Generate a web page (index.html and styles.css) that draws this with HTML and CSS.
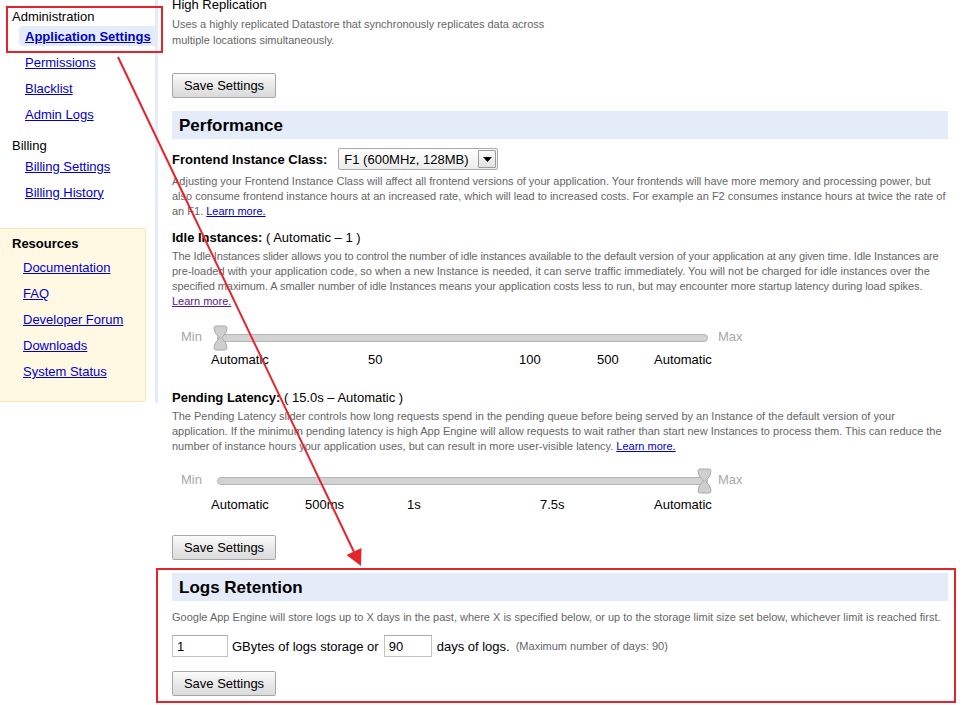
FILE: index.html
```html
<!DOCTYPE html>
<html>
<head>
<meta charset="utf-8">
<title>Application Settings</title>
<link rel="stylesheet" href="styles.css">
</head>
<body>
<div class="page">
  <nav class="sidebar">
    <div class="nav-title admin">Administration</div>
    <ul class="nav-list">
      <li class="nav-item active"><a href="#">Application Settings</a></li>
      <li class="nav-item"><a href="#">Permissions</a></li>
      <li class="nav-item"><a href="#">Blacklist</a></li>
      <li class="nav-item"><a href="#">Admin Logs</a></li>
    </ul>
    <div class="nav-title billing">Billing</div>
    <ul class="nav-list billing-list">
      <li class="nav-item"><a href="#">Billing Settings</a></li>
      <li class="nav-item"><a href="#">Billing History</a></li>
    </ul>
    <div class="resources">
      <div class="res-title">Resources</div>
      <ul class="res-list">
        <li><a href="#">Documentation</a></li>
        <li><a href="#">FAQ</a></li>
        <li><a href="#">Developer Forum</a></li>
        <li><a href="#">Downloads</a></li>
        <li><a href="#">System Status</a></li>
      </ul>
    </div>
  </nav>

  <main class="main">
    <div class="opt-title">High Replication</div>
    <p class="desc desc-hr">Uses a highly replicated Datastore that synchronously replicates data across<br>multiple locations simultaneously.</p>
    <button class="btn btn-first">Save Settings</button>

    <h2 class="section-head perf">Performance</h2>
    <div class="field-row">
      <span class="field-label">Frontend Instance Class:</span>
      <div class="select">
        <span class="select-text">F1 (600MHz, 128MB)</span>
        <span class="select-arrow"><svg width="9" height="5" viewBox="0 0 9 5"><path d="M0 0H9L4.5 5Z" fill="#000"/></svg></span>
      </div>
    </div>
    <p class="desc desc-fe">Adjusting your Frontend Instance Class will affect all frontend versions of your application. Your frontends will have more memory and processing power, but<br>also consume frontend instance hours at an increased rate, which will lead to increased costs. For example an F2 consumes instance hours at twice the rate of<br>an F1. <a href="#" class="learn">Learn more.</a></p>

    <div class="sub-head idle-head"><b>Idle Instances:</b> ( Automatic – 1 )</div>
    <p class="desc desc-sub"><span class="tight1">The Idle Instances slider allows you to control the number of idle instances available to the default version of your application at any given time. Idle Instances are</span><br>pre-loaded with your application code, so when a new Instance is needed, it can serve traffic immediately. You will not be charged for idle instances over the<br><span class="tight2">specified maximum. A smaller number of idle Instances means your application costs less to run, but may encounter more startup latency during load spikes.</span><br><a href="#" class="learn visited">Learn more.</a></p>
    <div class="slider idle-slider">
      <span class="slider-min">Min</span>
      <div class="track">
        <svg class="handle handle-left" width="15" height="26" viewBox="0 0 15 26"><path d="M3 1H12Q14 1 14 3.5Q14 8 8.5 13Q14 18 14 22.5Q14 25 12 25H3Q1 25 1 22.5Q1 18 6.5 13Q1 8 1 3.5Q1 1 3 1Z" fill="#cfcfcf" stroke="#a9a9a9" stroke-width="1"/></svg>
      </div>
      <span class="slider-max">Max</span>
    </div>
    <div class="ticks idle-ticks">
      <span class="t1">Automatic</span><span class="t2">50</span><span class="t3">100</span><span class="t4">500</span><span>Automatic</span>
    </div>

    <div class="sub-head pend-head"><b>Pending Latency:</b> ( 15.0s – Automatic )</div>
    <p class="desc desc-sub">The Pending Latency slider controls how long requests spend in the pending queue before being served by an Instance of the default version of your<br>application. If the minimum pending latency is high App Engine will allow requests to wait rather than start new Instances to process them. This can reduce the<br>number of instance hours your application uses, but can result in more user-visible latency. <a href="#" class="learn">Learn more.</a></p>
    <div class="slider pend-slider">
      <span class="slider-min">Min</span>
      <div class="track">
        <svg class="handle handle-right" width="15" height="26" viewBox="0 0 15 26"><path d="M3 1H12Q14 1 14 3.5Q14 8 8.5 13Q14 18 14 22.5Q14 25 12 25H3Q1 25 1 22.5Q1 18 6.5 13Q1 8 1 3.5Q1 1 3 1Z" fill="#cfcfcf" stroke="#a9a9a9" stroke-width="1"/></svg>
      </div>
      <span class="slider-max">Max</span>
    </div>
    <div class="ticks pend-ticks">
      <span class="p1">Automatic</span><span class="p2">500ms</span><span class="p3">1s</span><span class="p4">7.5s</span><span>Automatic</span>
    </div>
    <button class="btn btn-pend">Save Settings</button>

    <h2 class="section-head logs">Logs Retention</h2>
    <p class="desc desc-logs">Google App Engine will store logs up to X days in the past, where X is specified below, or up to the storage limit size set below, whichever limit is reached first.</p>
    <div class="logs-row">
      <input class="text-in in-gb" type="text" value="1">
      <span class="logs-txt">GBytes of logs storage or</span>
      <input class="text-in in-days" type="text" value="90">
      <span class="logs-txt days-txt">days of logs.</span>
      <span class="logs-note">(Maximum number of days: 90)</span>
    </div>
    <button class="btn btn-logs">Save Settings</button>
  </main>
</div>

<svg class="annot" width="973" height="705" viewBox="0 0 973 705">
  <rect x="7" y="7" width="155" height="45" fill="none" stroke="#e5232b" stroke-width="2"/>
  <line x1="118" y1="57" x2="354" y2="552" stroke="#e5232b" stroke-width="2"/>
  <polygon points="361,566 346.5,555 361.5,548" fill="#e5232b"/>
  <rect x="157" y="569" width="798" height="133" fill="none" stroke="#e5232b" stroke-width="2"/>
</svg>
</body>
</html>
```

FILE: styles.css
```css
html, body {
  margin: 0;
  padding: 0;
  width: 973px;
  height: 705px;
  overflow: hidden;
  background: #fff;
}
body {
  position: relative;
  font-family: "Liberation Sans", Arial, sans-serif;
  font-size: 13px;
  color: #000;
}
a { color: #0000cc; text-decoration: underline; }

.page {
  display: flex;
  align-items: flex-start;
}

/* Sidebar */
.sidebar {
  box-sizing: border-box;
  width: 158px;
  height: 403px;
  border-right: 3px solid #e5ecf9;
  padding-top: 7px;
  flex: none;
}
.nav-title {
  padding-left: 12px;
  line-height: 16px;
}
.nav-title.admin {
  padding-top: 3px;
  line-height: 13px;
}
.nav-title.billing { margin-top: 11px; }
.nav-list {
  list-style: none;
  margin: 0;
  padding: 0;
}
.billing-list { margin-top: -1px; }
.nav-item {
  height: 26px;
  display: flex;
  align-items: center;
  padding-left: 25px;
}
.nav-item.active { padding-left: 19px; }
.nav-item.active a {
  flex: 1;
  line-height: 19px;
  padding: 1px 0 0 6px;
  background: #e5ecf9;
  border-radius: 4px 0 0 4px;
  font-weight: bold;
}
.resources {
  margin-top: 23px;
  width: 146px;
  box-sizing: border-box;
  background: #fff8e2;
  border: 1px solid #f7e8b2;
  border-left: none;
  border-radius: 0 3px 3px 0;
  padding: 7px 0 16px;
}
.res-title {
  padding-left: 12px;
  line-height: 16px;
  font-weight: bold;
  margin-bottom: 3px;
}
.res-list {
  list-style: none;
  margin: 0;
  padding: 0;
}
.res-list li {
  height: 26px;
  line-height: 26px;
  padding-left: 23px;
}

/* Main */
.main {
  width: 776px;
  margin-left: 14px;
  margin-top: -3px;
  flex: none;
}
.opt-title { line-height: 16px; }
.desc {
  margin: 0;
  font-size: 11px;
  line-height: 15px;
  color: #666;
  white-space: nowrap;
}
.desc-hr { margin-top: 3px; line-height: 16px; }
.desc-fe { margin-top: 4px; }
.desc-sub { margin-top: 3px; }
.desc-logs { margin-top: 9px; }
.tight1 { letter-spacing: -0.115px; }
.tight2 { letter-spacing: -0.07px; }
.learn { color: #0000cc; }
.learn.visited { color: #551a8b; }

.btn {
  display: block;
  box-sizing: border-box;
  width: 104px;
  height: 25px;
  padding: 0;
  font-family: "Liberation Sans", Arial, sans-serif;
  font-size: 13px;
  color: #000;
  background: linear-gradient(#fbfbfb, #e9e9e9 50%, #dadada);
  border: 1px solid #a6a6a6;
  border-radius: 2px;
}
.btn-first { margin-top: 25px; }
.btn-pend { margin-top: 22px; }
.btn-logs { margin-top: 14px; }

.section-head {
  margin: 13px 0 0;
  box-sizing: border-box;
  height: 28px;
  line-height: 28px;
  padding: 1px 0 0 7px;
  background: #e5ecf9;
  font-size: 17px;
  font-weight: bold;
}

.field-row {
  margin-top: 9px;
  height: 22px;
  display: flex;
  align-items: center;
  gap: 11px;
}
.field-label { font-weight: bold; }
.select {
  box-sizing: border-box;
  width: 160px;
  height: 22px;
  display: flex;
  align-items: center;
  border: 1px solid #a9a9a9;
  border-radius: 2px;
  background: linear-gradient(#ffffff, #ececec);
  padding-left: 5px;
}
.select-text { flex: 1; }
.select-arrow {
  box-sizing: border-box;
  width: 18px;
  height: 18px;
  margin-right: 1px;
  border: 1px solid #9d9d9d;
  border-radius: 1px;
  background: linear-gradient(#fdfdfd, #e2e2e2);
  display: flex;
  align-items: center;
  justify-content: center;
}

.sub-head { line-height: 16px; }
.idle-head { margin-top: 11px; }
.pend-head { margin-top: 22px; }

.slider {
  height: 26px;
  display: flex;
  align-items: center;
}
.idle-slider { margin-top: 16px; }
.pend-slider { margin-top: 14px; }
.slider-min {
  box-sizing: border-box;
  width: 45px;
  padding-left: 9px;
  margin-bottom: 3px;
  color: #a8a8a8;
}
.slider-max {
  margin-left: 10px;
  margin-bottom: 3px;
  color: #a8a8a8;
}
.track {
  position: relative;
  box-sizing: border-box;
  width: 491px;
  height: 8px;
  background: #d3d3d3;
  border: 1px solid #b4b4b4;
  border-radius: 4px;
}
.handle {
  position: absolute;
  top: -10px;
}
.handle-left { left: -5px; }
.handle-right { right: -5px; }

.ticks {
  display: flex;
  padding-left: 39px;
  line-height: 16px;
  white-space: nowrap;
}
.idle-ticks { margin-top: 1px; }
.pend-ticks { margin-top: 3px; }
.t1 { width: 157px; }
.t2 { width: 151px; }
.t3 { width: 78px; }
.t4 { width: 57px; }
.p1 { width: 94px; }
.p2 { width: 102px; }
.p3 { width: 133px; }
.p4 { width: 114px; }

.logs-row {
  margin-top: 10px;
  height: 22px;
  display: flex;
  align-items: center;
  white-space: nowrap;
}
.text-in {
  box-sizing: border-box;
  height: 22px;
  margin: 0;
  padding: 0 4px;
  font-family: "Liberation Sans", Arial, sans-serif;
  font-size: 13px;
  color: #000;
  border: 1px solid #c4c4c4;
  border-top-color: #a9a9a9;
  background: #fff;
}
.in-gb { width: 56px; }
.in-days { width: 48px; }
.logs-txt { margin-left: 4px; margin-right: 5px; }
.days-txt { margin-left: 5px; }
.logs-note {
  margin-left: 1px;
  font-size: 11px;
  color: #666;
}

.annot {
  position: absolute;
  left: 0;
  top: 0;
  pointer-events: none;
}
```
